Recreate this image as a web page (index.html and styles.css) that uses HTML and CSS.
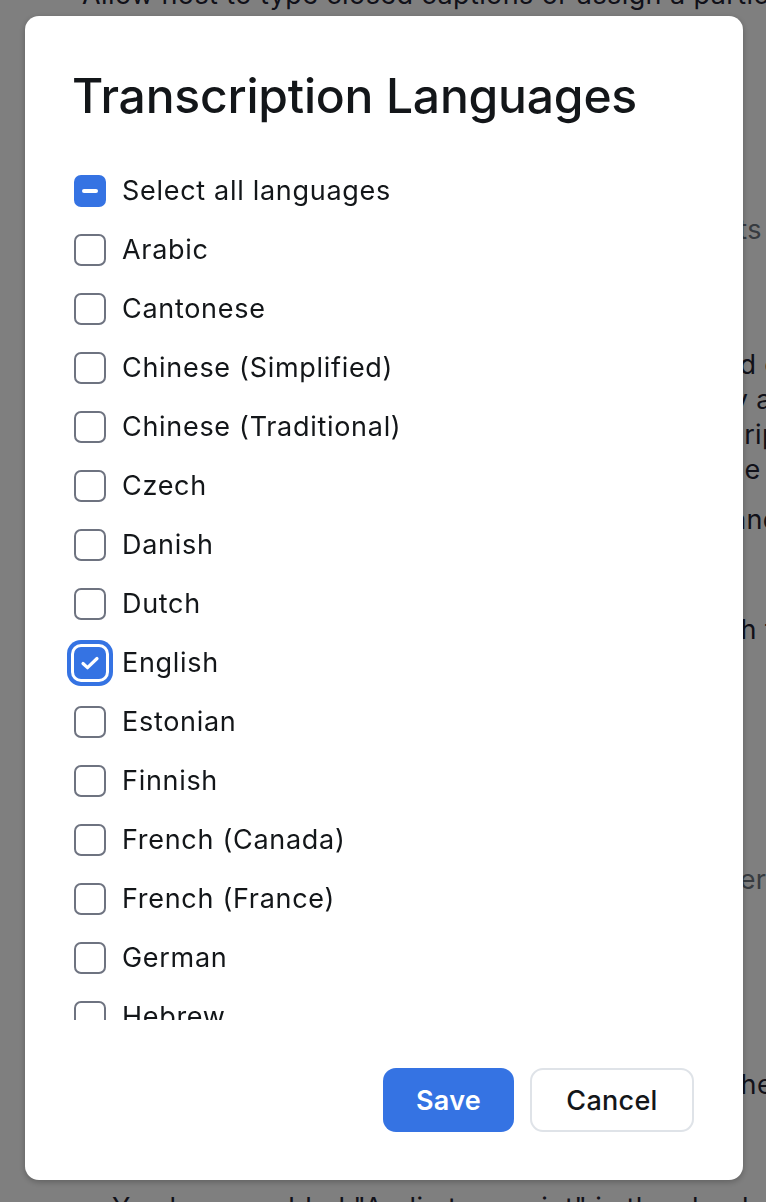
FILE: index.html
```html
<!DOCTYPE html>
<html lang="en">
<head>
    <meta charset="UTF-8">
    <meta name="viewport" content="width=device-width, initial-scale=1.0">
    <title>Transcription Languages</title>
    <link rel="stylesheet" href="styles.css">
</head>
<body>

    <!-- settings page behind the dialog -->
    <div class="page">
        <p class="bg-line top-line">Allow host to type closed captions or assign a participant to type them</p>
        <p class="bg-line faint" style="margin-top: 200px;">Enable live transcription service to show transcripts in the side panel</p>
        <p class="bg-line" style="margin-top: 100px;">Allow participants to request the host to use closed captions and transcripts</p>
        <p class="bg-line">Save captions so that participants can save a copy and download them</p>
        <p class="bg-line">Translated captions are included with audio transcription transcripts</p>
        <p class="bg-line">Participants can choose a caption language outside of the meeting</p>
        <p class="bg-line" style="margin-top: 15px;">Include audio captions in the cloud recording file and the recording file</p>
        <p class="bg-line" style="margin-top: 75px;">Show captions and transcription on the screen with the speaker information</p>
        <p class="bg-line faint" style="margin-top: 215px;">Allow participants to view the full transcript with permission of the host</p>
        <p class="bg-line" style="margin-top: 170px;">Show captions for the host and participants after the transcription ends</p>
        <p class="bg-line bottom-line">You have enabled "Audio transcript" in the cloud recording settings</p>
    </div>

    <div class="overlay"></div>

    <div class="modal">
        <h1>Transcription Languages</h1>

        <label class="row">
            <span class="box partial"><span class="dash"></span></span>
            Select all languages
        </label>

        <div class="lang-list" id="langList">
            <!-- rows are added below -->
        </div>

        <div class="actions">
            <button class="btn btn-save">Save</button>
            <button class="btn btn-cancel">Cancel</button>
        </div>
    </div>

<script>
    const languages = [
        "Arabic", "Cantonese", "Chinese (Simplified)", "Chinese (Traditional)",
        "Czech", "Danish", "Dutch", "English", "Estonian", "Finnish",
        "French (Canada)", "French (France)", "German", "Hebrew", "Hindi", "Hungarian"
    ];

    const list = document.getElementById("langList");

    languages.forEach(name => {
        const row = document.createElement("label");
        row.className = "row";
        if (name === "English") {
            row.innerHTML = `
                <span class="box checked">
                    <svg width="22" height="22" viewBox="0 0 22 22"><path d="M4 11.5l4.5 4.2L18 6.5" fill="none" stroke="#fff" stroke-width="3.2" stroke-linecap="round" stroke-linejoin="round"/></svg>
                </span>
                ${name}`;
        } else {
            row.innerHTML = `<span class="box"></span>${name}`;
        }
        list.appendChild(row);
    });
</script>

</body>
</html>
```

FILE: styles.css
```css
body {
    margin: 0;
    padding: 0;
    font-family: Inter, "Noto Sans", sans-serif;
    background: white;
    overflow: hidden;
    height: 1202px;
}

.page {
    padding-left: 82px;
    overflow: hidden;
    height: 1202px;
}

.bg-line {
    margin: 0;
    font-size: 27px;
    line-height: 35px;
    color: #232333;
    white-space: nowrap;
    letter-spacing: 0.4px;
}

.bg-line.faint {
    color: #6e7680;
}

.top-line {
    margin-top: -23px;
}

.bottom-line {
    padding-left: 30px;
    margin-top: 88px;
}

.overlay {
    position: fixed;
    inset: 0;
    background: rgba(0, 0, 0, 0.5);
}

.modal {
    position: fixed;
    left: 25px;
    top: 16px;
    width: 718px;
    height: 1164px;
    box-sizing: border-box;
    padding: 52px 49px 48px 49px;
    background: white;
    border-radius: 14px;
    box-shadow: 0px 2px 6px rgba(0, 0, 0, 0.25);
    display: flex;
    flex-direction: column;
}

h1 {
    margin: 0 0 38px -2px;
    font-size: 48px;
    line-height: 55px;
    font-weight: 500;
    color: #131619;
    letter-spacing: -0.2px;
}

.row {
    display: flex;
    align-items: center;
    gap: 16px;
    height: 59px;
    flex-shrink: 0;
    font-size: 27px;
    letter-spacing: 0.7px;
    color: #131619;
}

.box {
    width: 32px;
    height: 32px;
    box-sizing: border-box;
    border: 2px solid #6e7380;
    border-radius: 7px;
    background: white;
    display: flex;
    align-items: center;
    justify-content: center;
    flex-shrink: 0;
}

.box.partial,
.box.checked {
    background: #3573e3;
    border-color: #3573e3;
}

.box.checked {
    box-shadow: 0 0 0 3px #fff, 0 0 0 7px #3573e3;
}

.dash {
    width: 16px;
    height: 4px;
    border-radius: 2px;
    background: white;
}

.lang-list {
    height: 800px;
    flex-shrink: 0;
    overflow-y: scroll;
    display: flex;
    flex-direction: column;
    padding-left: 8px;
    margin-left: -8px;
}

.lang-list::-webkit-scrollbar {
    width: 8px;
}

.lang-list::-webkit-scrollbar-track {
    background: #f1f1f6;
}

.lang-list::-webkit-scrollbar-thumb {
    background: transparent;
}

.actions {
    margin-top: 48px;
    display: flex;
    justify-content: flex-end;
    gap: 16px;
}

.btn {
    height: 64px;
    border-radius: 13px;
    font-family: Inter, "Noto Sans", sans-serif;
    font-size: 27px;
    letter-spacing: 0.3px;
    cursor: pointer;
}

.btn-save {
    width: 131px;
    background: #3573e3;
    color: white;
    border: none;
    font-weight: 600;
}

.btn-cancel {
    width: 164px;
    background: white;
    color: #131619;
    border: 2px solid #dfe3e8;
    font-weight: 500;
}
```
